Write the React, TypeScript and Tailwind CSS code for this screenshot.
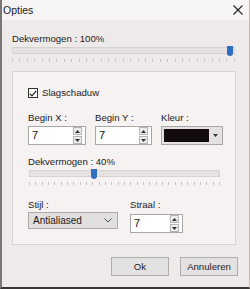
import React from "react"

const font = { fontFamily: '"Liberation Sans", Arial, sans-serif' }

// slider: track + thumb + tick row
function Slider({ width, pos }: { width: number; pos: number }) {
  const ticks = Array.from({ length: 31 })
  return (
    <div style={{ width }} className="flex flex-col">
      <div className="relative h-[7px] w-full border border-[#d6d2d2] bg-[#e6e2e2]">
        <div
          className="absolute top-[-2px] h-[10px] w-[6px] rounded-b-[3px] bg-[#2f6fbf]"
          style={{ left: `calc(${pos}% - 3px)` }}
        />
      </div>
      <div className="mt-[5px] flex h-[3px] justify-between">
        {ticks.map((_, i) => (
          <span key={i} className="h-[3px] w-px bg-[#c4c0c0]" />
        ))}
      </div>
    </div>
  )
}

function Spinner() {
  return (
    <div className="flex flex-col gap-px">
      <div className="flex h-[8px] w-[9px] items-center justify-center border border-[#b5b5b5] bg-[#ececec]">
        <svg width="5" height="3" viewBox="0 0 5 3"><path d="M0 3 L2.5 0 L5 3 Z" fill="#333" /></svg>
      </div>
      <div className="flex h-[8px] w-[9px] items-center justify-center border border-[#b5b5b5] bg-[#ececec]">
        <svg width="5" height="3" viewBox="0 0 5 3"><path d="M0 0 L2.5 3 L5 0 Z" fill="#333" /></svg>
      </div>
    </div>
  )
}

function NumInput({ w, value }: { w: string; value: string }) {
  return (
    <div className={`${w} flex h-[19px] items-center justify-between border border-[#a9a6a6] bg-white pl-[3px] pr-[3px] text-[11px] text-[#111]`}>
      <span className="leading-none">{value}</span>
      <Spinner />
    </div>
  )
}

export default function App() {
  return (
    <div
      style={font}
      className="flex h-[289px] w-[250px] flex-col border-b-2 border-l-2 border-r border-b-[#3a3535] border-l-[#7a7676] border-r-[#c9b9b9] bg-[#eeeaea] text-[9.6px] text-[#1b1b1b]"
    >
      {/* title bar */}
      <div className="flex h-[20px] items-center justify-between bg-[#f7f4f4] pl-[1px] pr-[6px]">
        <span className="text-[10.5px] leading-none">Opties</span>
        <svg width="10" height="10" viewBox="0 0 10 10">
          <path d="M0.5 0.5 L9.5 9.5 M9.5 0.5 L0.5 9.5" stroke="#222" strokeWidth="1.1" />
        </svg>
      </div>

      <div className="flex flex-col px-[10px]">
        <div className="mt-[12px] h-[14px] leading-[14px]">Dekvermogen : 100%</div>
        <div className="mt-[1px]">
          <Slider width={223} pos={98} />
        </div>

        {/* group box */}
        <div className="mt-[9px] flex h-[174px] w-[224px] flex-col border border-[#d9d3d3] bg-[#f6f2f2] pl-[15px]">
          <div className="mt-[14px] flex items-center gap-[4px]">
            <div className="flex h-[10px] w-[10px] items-center justify-center border border-[#333] bg-white">
              <svg width="8" height="7" viewBox="0 0 8 7">
                <path d="M0.8 3.6 L3 5.8 L7.3 0.8" stroke="#222" strokeWidth="1.2" fill="none" />
              </svg>
            </div>
            <span className="leading-[14px]">Slagschaduw</span>
          </div>

          <div className="mt-[11px] flex gap-[9px]">
            <div className="flex flex-col gap-[1px]">
              <span className="h-[14px] leading-[14px]">Begin X :</span>
              <NumInput w="w-[58px]" value="7" />
            </div>
            <div className="flex flex-col gap-[1px]">
              <span className="h-[14px] leading-[14px]">Begin Y :</span>
              <NumInput w="w-[57px]" value="7" />
            </div>
            <div className="flex flex-col gap-[1px]">
              <span className="h-[14px] leading-[14px]">Kleur :</span>
              <div className="flex h-[19px] w-[62px] items-center border border-[#aaa6a6] bg-[#e4e1e1] pl-[2px]">
                <div className="h-[13px] w-[45px] bg-[#140c0c]" />
                <div className="flex flex-1 items-center justify-center">
                  <svg width="5" height="3" viewBox="0 0 5 3"><path d="M0 0 L2.5 3 L5 0 Z" fill="#333" /></svg>
                </div>
              </div>
            </div>
          </div>

          <div className="mt-[10px] h-[14px] leading-[14px]">Dekvermogen : 40%</div>
          <div className="mt-[1px] pl-[1px]">
            <Slider width={191} pos={34} />
          </div>

          <div className="mt-[13px] flex gap-[12px]">
            <div className="flex flex-col">
              <span className="h-[14px] leading-[14px]">Stijl :</span>
              <div className="flex h-[17px] w-[90px] items-center justify-between border border-[#aeaaaa] bg-[#e2dfdf] pl-[4px] pr-[5px]">
                <span className="text-[10px] leading-none">Antialiased</span>
                <svg width="8" height="5" viewBox="0 0 8 5">
                  <path d="M0.5 0.5 L4 4 L7.5 0.5" stroke="#555" strokeWidth="1" fill="none" />
                </svg>
              </div>
            </div>
            <div className="flex flex-col gap-[2px]">
              <span className="h-[14px] leading-[14px]">Straal :</span>
              <NumInput w="w-[53px]" value="7" />
            </div>
          </div>
        </div>

        {/* buttons */}
        <div className="mt-[12px] flex justify-end gap-[11px] pr-[1px]">
          <button className="flex h-[19px] w-[58px] items-center justify-center border border-[#adadad] bg-[#e3e1e1] leading-none">
            Ok
          </button>
          <button className="flex h-[19px] w-[58px] items-center justify-center border border-[#adadad] bg-[#e3e1e1] leading-none">
            Annuleren
          </button>
        </div>
      </div>
    </div>
  )
}
